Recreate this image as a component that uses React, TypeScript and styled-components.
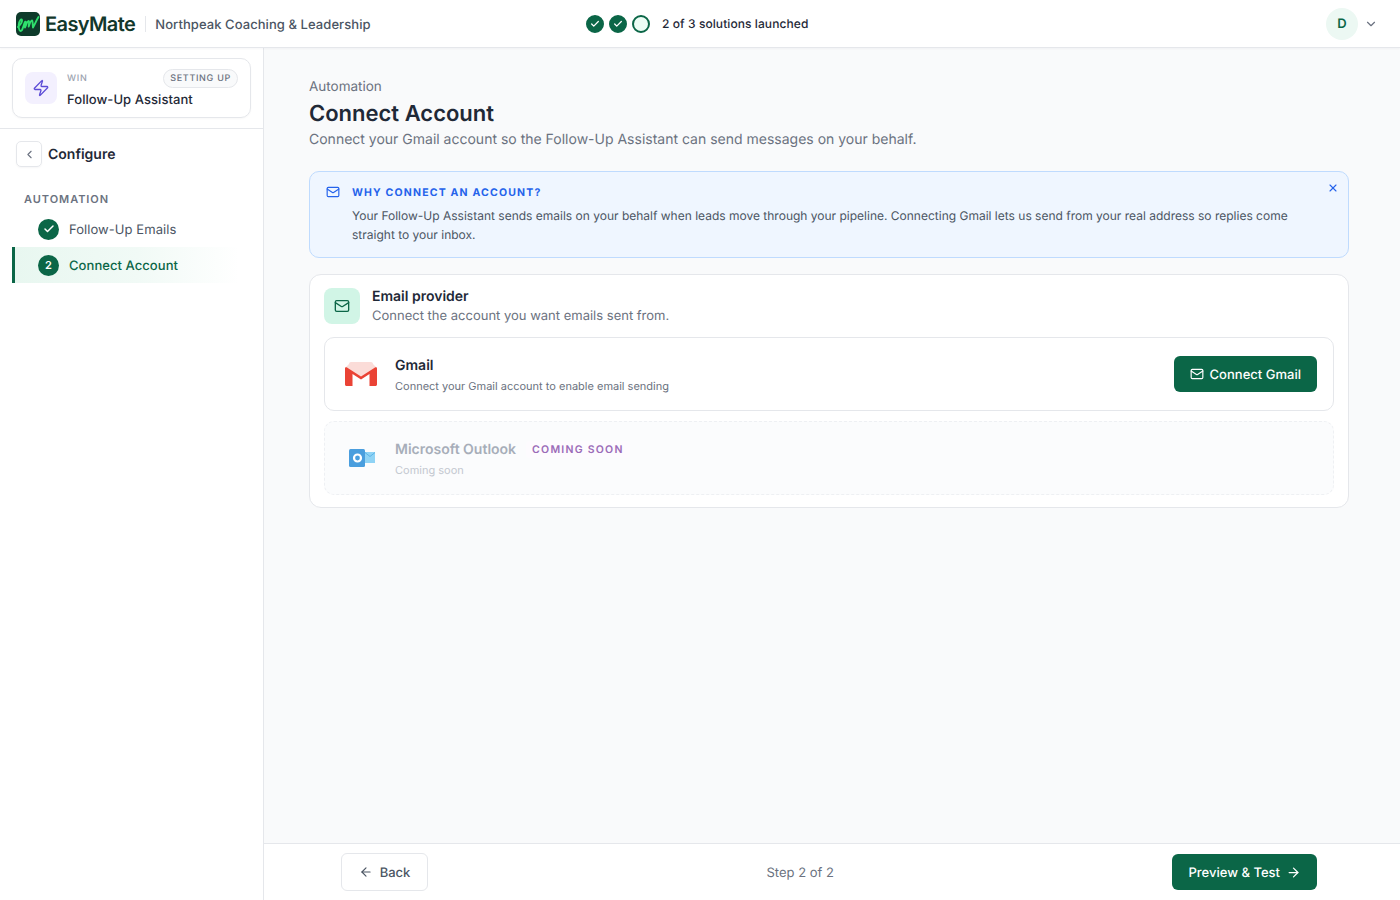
import React from "react";
import styled, { createGlobalStyle } from "styled-components";
import { ArrowLeft, ArrowRight, Check, ChevronDown, ChevronLeft, Mail, X, Zap } from "lucide-react";

const GREEN = "#0b6647";

const Global = createGlobalStyle`
  html, body { margin: 0; padding: 0; height: 100%; }
  body { font-family: Inter, "Liberation Sans", sans-serif; color: #1f2937; background: #fff; -webkit-font-smoothing: antialiased; text-rendering: geometricPrecision; }
  * { box-sizing: border-box; }
`;

const Page = styled.div`
  width: 1400px; height: 900px; display: flex; flex-direction: column; overflow: hidden;
`;
const Header = styled.header`
  height: 48px; flex: none; display: flex; align-items: center; background: #fff;
  border-bottom: 1px solid #e5e7eb; box-shadow: 0 1px 2px rgba(17,24,39,.04); padding: 0 22px 0 16px; position: relative; z-index: 2;
`;
const Brand = styled.div`display: flex; align-items: center; width: 570px;`;
const LogoBox = styled.svg`width: 24px; height: 24px; flex: none; display: block;`;
const Wordmark = styled.span`
  margin-left: 5px; font-size: 20px; font-weight: 600; color: #12382c; letter-spacing: -0.6px; line-height: 24px;
`;
const BrandDivider = styled.span`width: 1px; height: 16px; background: #e5e7eb; margin: 0 9.5px;`;
const Org = styled.span`font-size: 13px; font-weight: 500; color: #4b5563; letter-spacing: .07px; padding-top: 2px;`;
const Progress = styled.div`display: flex; align-items: center;`;
const Dots = styled.div`display: flex; gap: 5px; margin-right: 12px;`;
const Dot = styled.span<{ $done?: boolean }>`
  width: 18px; height: 18px; border-radius: 50%; display: flex; align-items: center; justify-content: center;
  background: ${(p) => (p.$done ? GREEN : "#ecfdf5")}; border: 2px solid ${GREEN}; color: #fff;
`;
const ProgressText = styled.span`font-size: 12px; font-weight: 500; color: #1f2937; letter-spacing: .08px;`;
const UserArea = styled.div`margin-left: auto; display: flex; align-items: center; gap: 6px; color: #6b7280;`;
const Avatar = styled.div`
  width: 32px; height: 32px; border-radius: 50%; background: #ecf8f3; color: ${GREEN};
  font-size: 13px; font-weight: 600; display: flex; align-items: center; justify-content: center;
`;
const Body = styled.div`flex: 1; display: flex; min-height: 0;`;
const Sidebar = styled.aside`width: 264px; flex: none; background: #fff; border-right: 1px solid #e5e7eb;`;
const SolutionWrap = styled.div`padding: 10px 12px; border-bottom: 1px solid #e5e7eb; height: 81px;`;
const SolutionCard = styled.div`
  height: 60px; border: 1px solid #e5e7eb; border-radius: 10px; padding: 0 12px; display: flex; align-items: center; gap: 10px;
  box-shadow: 0 1px 2px rgba(17,24,39,.03);
`;
const SolutionIcon = styled.div`
  width: 32px; height: 32px; border-radius: 8px; background: #f3f0fe; color: #5b4bd6;
  display: flex; align-items: center; justify-content: center; flex: none;
`;
const SolutionInfo = styled.div`flex: 1; min-width: 0; padding-top: 1px;`;
const SolutionTop = styled.div`display: flex; align-items: center; justify-content: space-between; height: 22px;`;
const Eyebrow = styled.span`font-size: 9px; font-weight: 500; color: #9ca3af; letter-spacing: .8px;`;
const Pill = styled.span`
  font-size: 9px; font-weight: 500; letter-spacing: .7px; color: #6b7280; height: 19px; padding: 0 6px; border: 1px solid #e5e7eb;
  border-radius: 10px; background: #f9fafb; display: flex; align-items: center;
`;
const SolutionName = styled.div`font-size: 13px; line-height: 20px; font-weight: 500; color: #1f2937; letter-spacing: .06px;`;
const ConfigureRow = styled.div`display: flex; align-items: center; gap: 6px; padding: 12px 16px 0; height: 38px;`;
const BackSquare = styled.div`
  width: 26px; height: 26px; border: 1px solid #e5e7eb; border-radius: 5px; display: flex; align-items: center; justify-content: center; color: #6b7280;
  box-shadow: 0 1px 2px rgba(17,24,39,.04);
`;
const ConfigureTitle = styled.span`font-size: 14px; font-weight: 600; color: #1f2937;`;
const GroupLabel = styled.div`
  font-size: 11px; line-height: 14px; font-weight: 600; letter-spacing: .95px; color: #6b7280; padding: 25px 0 0 24px;
`;
const NavList = styled.div`display: flex; flex-direction: column; margin-top: 5px; padding-right: 24px; margin-left: 12px;`;
const NavItem = styled.div<{ $active?: boolean }>`
  height: 36px; display: flex; align-items: center; gap: 10px; padding-left: ${(p) => (p.$active ? 23 : 26)}px;
  font-size: 13px; letter-spacing: .06px; font-weight: ${(p) => (p.$active ? 500 : 400)}; color: ${(p) => (p.$active ? GREEN : "#4b5563")};
  border-left: ${(p) => (p.$active ? `3px solid ${GREEN}` : "none")};
  background: ${(p) => (p.$active ? "linear-gradient(90deg, #e8f7f0 0%, #f1faf6 55%, #ffffff 100%)" : "none")};
`;
const NavLabel = styled.span`padding-top: 2px;`;
const NavBadge = styled.span`
  width: 21px; height: 21px; border-radius: 50%; background: ${GREEN}; color: #fff; font-size: 11px; font-weight: 600;
  display: flex; align-items: center; justify-content: center; flex: none;
`;
const Main = styled.main`flex: 1; min-width: 0; display: flex; flex-direction: column; background: #f9fafb;`;
const Content = styled.div`flex: 1; padding: 31px 51px 0 45px; min-height: 0;`;
const Crumb = styled.div`font-size: 13.5px; line-height: 16px; color: #6b7280;`;
const Title = styled.h1`margin: 5px 0 0; font-size: 22px; line-height: 28px; font-weight: 600; color: #1f2937;`;
const Desc = styled.p`margin: 2px 0 0; font-size: 14px; line-height: 20px; color: #6b7280;`;
const Banner = styled.section`
  position: relative; margin-top: 21px; height: 87px; background: #eff6ff; border: 1px solid #bfdbfe; border-radius: 10px; padding: 14px 16px 0;
  display: flex; gap: 12px;
`;
const BannerIcon = styled.div`color: #2563eb; flex: none; height: 14px; width: 14px; margin-top: -1px; display: flex; align-items: center;`;
const BannerBody = styled.div`flex: 1;`;
const BannerTitle = styled.div`font-size: 10.5px; line-height: 14px; font-weight: 700; color: #2563eb; letter-spacing: 1.18px;`;
const BannerText = styled.p`margin: 6px 0 0; font-size: 12px; line-height: 19px; color: #4b5563; max-width: 950px;`;
const BannerClose = styled.div`position: absolute; top: 10px; right: 9px; color: #2563eb; display: flex;`;
const Card = styled.section`
  margin-top: 16px; background: #fff; border: 1px solid #e5e7eb; border-radius: 12px; padding: 13px 14px 12px;
`;
const CardHead = styled.div`display: flex; gap: 12px; align-items: center; height: 36px;`;
const CardIcon = styled.div`
  width: 36px; height: 36px; border-radius: 8px; background: #d1f5e6; color: ${GREEN}; display: flex; align-items: center; justify-content: center;
`;
const CardHeadText = styled.div`flex: 1; padding-top: 2px;`;
const CardTitle = styled.div`font-size: 14px; line-height: 18px; font-weight: 600; color: #1f2937;`;
const CardSub = styled.div`font-size: 13px; line-height: 20px; color: #6b7280;`;
const Providers = styled.div`display: flex; flex-direction: column; gap: 10px; margin-top: 13px;`;
const Provider = styled.div<{ $muted?: boolean }>`
  height: 74px; display: flex; align-items: center; padding: 0 16px 0 20px; border-radius: 10px;
  border: 1px ${(p) => (p.$muted ? "dashed #eef0f3" : "solid #e5e7eb")};
  background: ${(p) => (p.$muted ? "#fbfcfd" : "#fff")};
`;
const ProviderLogo = styled.svg`width: 34px; height: 34px; flex: none; margin-right: 16px; display: block;`;
const ProviderInfo = styled.div`flex: 1; padding-top: 1px;`;
const ProviderNameRow = styled.div`display: flex; align-items: center; gap: 10px; height: 20px;`;
const ProviderName = styled.span<{ $muted?: boolean }>`
  font-size: 14px; font-weight: 600; color: ${(p) => (p.$muted ? "#a7aeb9" : "#1f2937")};
`;
const Soon = styled.span`
  font-size: 10.5px; font-weight: 600; letter-spacing: 1.25px; color: #9b6bb8; padding: 2px 6px; background: #fdfbfe; border-radius: 4px;
`;
const ProviderDesc = styled.div<{ $muted?: boolean }>`
  margin-top: 2px; font-size: 11px; line-height: 16px; color: ${(p) => (p.$muted ? "#c3c8d0" : "#6b7280")};
`;
const PrimaryButton = styled.button`
  height: 36px; border: none; border-radius: 6px; background: ${GREEN}; color: #fff; font: 500 13px Inter, sans-serif; letter-spacing: .015px;
  text-rendering: geometricPrecision; display: flex; align-items: center; gap: 6px; padding: 0 16px;
`;
const ButtonLabel = styled.span`padding-top: 2px;`;
const Footer = styled.footer`
  height: 57px; flex: none; background: #fff; border-top: 1px solid #e5e7eb; padding: 0 83px 0 77px;
  display: flex; align-items: center; justify-content: space-between;
`;
const GhostButton = styled.button`
  height: 38px; width: 87px; border: 1px solid #e5e7eb; border-radius: 6px; background: #fff; color: #4b5563; font: 500 13px Inter, sans-serif;
  text-rendering: geometricPrecision; display: flex; align-items: center; justify-content: center; gap: 7px;
`;
const StepText = styled.span`font-size: 13px; color: #6b7280; padding-top: 2px;`;

export default function App() {
  return (
    <Page>
      <Global />
      <Header>
        <Brand>
          <LogoBox viewBox="0 0 24 24" aria-hidden>
            <rect width="24" height="24" rx="5" fill="#0e3b2b" />
            <path d="M2 15C4 13 6.500 10 6 8C5.500 6.500 3 8.500 2.700 13C2.500 17 4 21 6 18C7 16 8 12 9 10C9.700 9 10 10 9.800 11.500L9 15.500C10 13 11.500 9 12.500 9C13.500 9 13 12 12.700 14.500C13.500 12 15 8.500 16 8.500C17 8.500 16.500 13 17 15.500C18.500 13 20.500 8 22.500 5" fill="none" stroke="#2fe06d" strokeWidth="1.9" strokeLinecap="round" strokeLinejoin="round" />
          </LogoBox>
          <Wordmark>EasyMate</Wordmark>
          <BrandDivider />
          <Org>Northpeak Coaching &amp; Leadership</Org>
        </Brand>
        <Progress>
          <Dots>
            <Dot $done><Check size={10} strokeWidth={3} /></Dot>
            <Dot $done><Check size={10} strokeWidth={3} /></Dot>
            <Dot />
          </Dots>
          <ProgressText>2 of 3 solutions launched</ProgressText>
        </Progress>
        <UserArea>
          <Avatar>D</Avatar>
          <ChevronDown size={14} />
        </UserArea>
      </Header>
      <Body>
        <Sidebar>
          <SolutionWrap>
            <SolutionCard>
              <SolutionIcon><Zap size={18} strokeWidth={1.75} /></SolutionIcon>
              <SolutionInfo>
                <SolutionTop>
                  <Eyebrow>WIN</Eyebrow>
                  <Pill>SETTING UP</Pill>
                </SolutionTop>
                <SolutionName>Follow-Up Assistant</SolutionName>
              </SolutionInfo>
            </SolutionCard>
          </SolutionWrap>
          <ConfigureRow>
            <BackSquare><ChevronLeft size={13} /></BackSquare>
            <ConfigureTitle>Configure</ConfigureTitle>
          </ConfigureRow>
          <GroupLabel>AUTOMATION</GroupLabel>
          <NavList>
            <NavItem>
              <NavBadge><Check size={12} strokeWidth={3} /></NavBadge>
              <NavLabel>Follow-Up Emails</NavLabel>
            </NavItem>
            <NavItem $active>
              <NavBadge>2</NavBadge>
              <NavLabel>Connect Account</NavLabel>
            </NavItem>
          </NavList>
        </Sidebar>
        <Main>
          <Content>
            <Crumb>Automation</Crumb>
            <Title>Connect Account</Title>
            <Desc>Connect your Gmail account so the Follow-Up Assistant can send messages on your behalf.</Desc>
            <Banner>
              <BannerIcon><Mail size={14} /></BannerIcon>
              <BannerBody>
                <BannerTitle>WHY CONNECT AN ACCOUNT?</BannerTitle>
                <BannerText>Your Follow-Up Assistant sends emails on your behalf when leads move through your pipeline. Connecting Gmail lets us send from your real address so replies come straight to your inbox.</BannerText>
              </BannerBody>
              <BannerClose><X size={12} strokeWidth={2.25} /></BannerClose>
            </Banner>
            <Card>
              <CardHead>
                <CardIcon><Mail size={16} /></CardIcon>
                <CardHeadText>
                  <CardTitle>Email provider</CardTitle>
                  <CardSub>Connect the account you want emails sent from.</CardSub>
                </CardHeadText>
              </CardHead>
              <Providers>
                <Provider>
                  <ProviderLogo viewBox="0 0 34 34" aria-hidden>
                    <path d="M4 7C4 5.900 4.900 5 6 5H26C27.100 5 28 5.900 28 7L31.500 10.500V12L16 21 .5 12V10.500z" fill="#fbdcd8" />
                    <path d="M0 11.500C0 10.500 1 10 2 10.600L16 19.500 30 10.600C31 10 32 10.500 32 11.500V27.500C32 28.300 31.300 29 30.500 29H24.500V17L16 22.500 7.500 17V29H1.500C.7 29 0 28.300 0 27.500z" fill="#ea4335" />
                  </ProviderLogo>
                  <ProviderInfo>
                    <ProviderNameRow><ProviderName>Gmail</ProviderName></ProviderNameRow>
                    <ProviderDesc>Connect your Gmail account to enable email sending</ProviderDesc>
                  </ProviderInfo>
                  <PrimaryButton><Mail size={14} /><ButtonLabel>Connect Gmail</ButtonLabel></PrimaryButton>
                </Provider>
                <Provider $muted>
                  <ProviderLogo viewBox="0 0 34 34" aria-hidden>
                    <path d="M18 11H30V22H18z" fill="#8fd3f5" />
                    <path d="M20 11.500L25 15.500 30 11.500" fill="none" stroke="#5bb4e8" strokeWidth="1" />
                    <rect x="4" y="8" width="16" height="18" rx="1.500" fill="#4a9ede" />
                    <circle cx="12.500" cy="17" r="3.500" fill="none" stroke="#fff" strokeWidth="2.200" />
                  </ProviderLogo>
                  <ProviderInfo>
                    <ProviderNameRow>
                      <ProviderName $muted>Microsoft Outlook</ProviderName>
                      <Soon>COMING SOON</Soon>
                    </ProviderNameRow>
                    <ProviderDesc $muted>Coming soon</ProviderDesc>
                  </ProviderInfo>
                </Provider>
              </Providers>
            </Card>
          </Content>
          <Footer>
            <GhostButton><ArrowLeft size={14} /><ButtonLabel>Back</ButtonLabel></GhostButton>
            <StepText>Step 2 of 2</StepText>
            <PrimaryButton><ButtonLabel>Preview &amp; Test</ButtonLabel><ArrowRight size={15} /></PrimaryButton>
          </Footer>
        </Main>
      </Body>
    </Page>
  );
}
